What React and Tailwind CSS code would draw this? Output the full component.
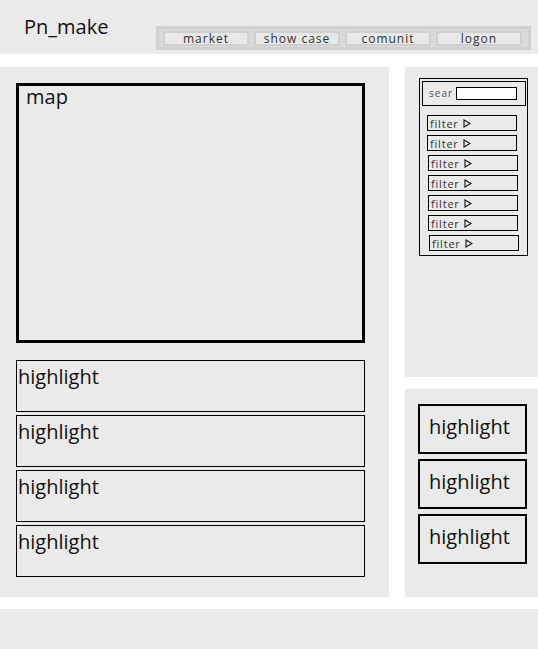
import React from 'react';

const navItems = ['market', 'show case', 'comunit', 'logon'];

function FilterRow({ shift }) {
  return (
    <div className={`flex items-center h-[16px] w-[90px] border border-black text-[11px] tracking-[0.8px] text-[#333] leading-none pl-[2px] ${shift}`}>
      filter
      <svg width="8" height="9" viewBox="0 0 8 9" className="ml-[4px]">
        <path d="M1 1 L7 4.5 L1 8 Z" fill="none" stroke="#111" strokeWidth="1.1" />
      </svg>
    </div>
  );
}

export default function App() {
  const shifts = ['ml-[7px]', 'ml-[7px]', 'ml-[8px]', 'ml-[8px]', 'ml-[8px]', 'ml-[8px]', 'ml-[9px]'];

  return (
    <div className="w-[538px] h-[649px] bg-white font-['Open_Sans',sans-serif] text-[#111]">
      {/* Header */}
      <div className="h-[54px] bg-[#eaeaea] flex">
        <div className="pl-[24px] pt-[13px] text-[20px] leading-[27px] w-[155px]">Pn_make</div>
        <div className="mt-[26px] ml-[1px] h-[24px] w-[375px] bg-[#dadada] border-[3px] border-[#d0d0d0] flex items-center gap-[5px] px-[4px]">
          {navItems.map((item) => (
            <div
              key={item}
              className="h-[15px] w-[86px] border-2 border-[#cfcfcf] bg-[#e8e8e8] text-[12px] tracking-[1px] leading-[12px] text-[#333] text-center"
            >
              {item}
            </div>
          ))}
        </div>
      </div>

      {/* Main */}
      <div className="flex mt-[13px]">
        <div className="w-[389px] h-[530px] bg-[#eaeaea] pl-[16px] pt-[16px]">
          <div className="w-[349px] h-[260px] border-[3px] border-black pl-[7px] text-[20px] leading-[22px]">map</div>
          <div className="mt-[17px] flex flex-col gap-[3px]">
            {[0, 1, 2, 3].map((i) => (
              <div key={i} className="w-[349px] h-[52px] border border-black pl-[1px] pt-[4px] text-[20px] leading-[24px]">
                highlight
              </div>
            ))}
          </div>
        </div>

        <div className="ml-[16px] w-[133px] flex flex-col gap-[12px]">
          <div className="h-[310px] bg-[#eaeaea] pl-[14px] pt-[11px]">
            <div className="w-[109px] h-[178px] border border-black pt-[2px]">
              <div className="ml-[2px] w-[104px] h-[25px] border border-black flex items-center pl-[6px] text-[10px] tracking-[1px] text-[#555]">
                sear
                <div className="ml-[3px] w-[61px] h-[13px] bg-white border border-black" />
              </div>
              <div className="mt-[9px] flex flex-col gap-[4px]">
                {shifts.map((s, i) => (
                  <FilterRow key={i} shift={s} />
                ))}
              </div>
            </div>
          </div>
          <div className="h-[208px] bg-[#eaeaea] pl-[13px] pt-[15px] flex flex-col gap-[5px]">
            {[0, 1, 2].map((i) => (
              <div key={i} className="w-[109px] h-[50px] border-2 border-black pl-[9px] pt-[8px] text-[20px] leading-[26px]">
                highlight
              </div>
            ))}
          </div>
        </div>
      </div>

      {/* Footer */}
      <div className="mt-[12px] h-[40px] bg-[#eaeaea]" />
    </div>
  );
}
